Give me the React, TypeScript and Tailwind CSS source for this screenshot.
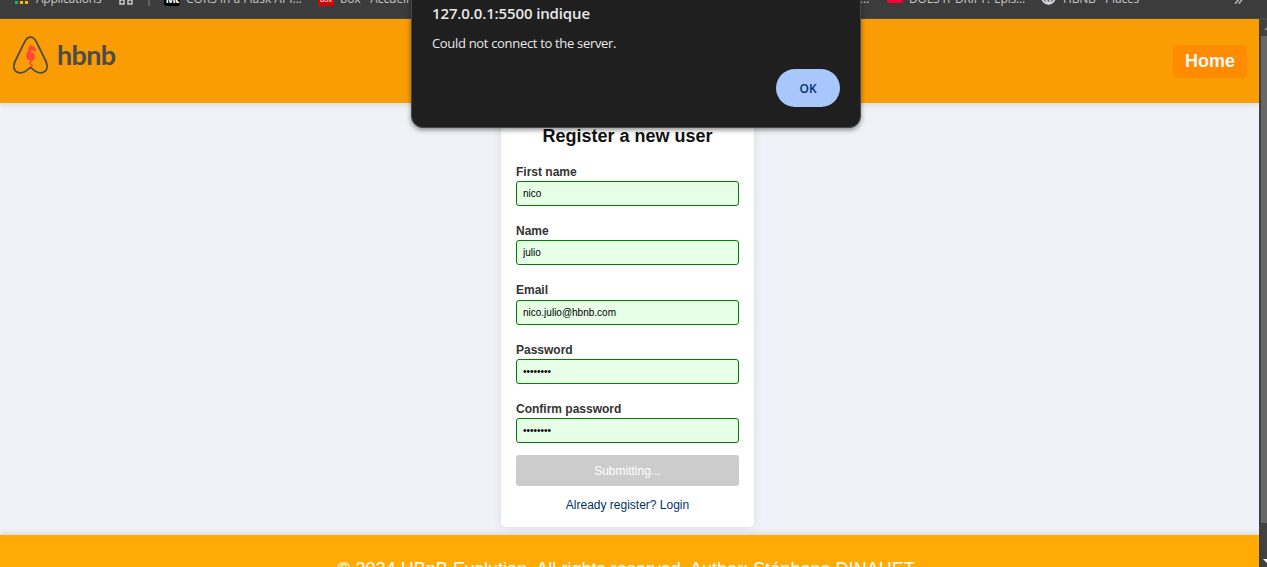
import React from "react";
import { Globe } from "lucide-react";

const uiFont = "font-['Open_Sans','Noto_Sans',sans-serif]";

const fields = [
  { label: "First name", type: "text", value: "nico", gap: "mb-[25px]", line: "leading-[14px]" },
  { label: "Name", type: "text", value: "julio", gap: "mb-[25px]", line: "leading-[14px]" },
  { label: "Email", type: "text", value: "nico.julio@hbnb.com", gap: "mb-[25px]", line: "leading-[15px]" },
  { label: "Password", type: "password", value: "password", gap: "mb-[25px]", line: "leading-[14px]" },
  { label: "Confirm password", type: "password", value: "password", gap: "mb-3", line: "leading-[14px]" },
];

function BookmarksBar() {
  return (
    <div className={`flex h-[19px] shrink-0 items-start overflow-hidden border-b border-[#4a4a4a] bg-[#3c3c3c] text-[12px] leading-[17px] whitespace-nowrap text-[#c7c7c7] ${uiFont}`}>
      <div className="-mt-[10px] flex w-full shrink-0 items-start">
        <svg className="ml-[15px] h-4 w-[14px] shrink-0" viewBox="0 0 14 16">
          <path fill="#ea4335" d="M0 1h3v3H0zM5 1h3v3H5zM10 1h3v3h-3z" />
          <path fill="#34a853" d="M0 6h3v3H0z" />
          <path fill="#4285f4" d="M5 6h3v3H5z" />
          <path fill="#fbbc04" d="M10 6h3v3h-3zM5 11h3v3H5zM10 11h3v3h-3z" />
          <path fill="#34a853" d="M0 11h3v3H0z" />
        </svg>
        <span className="ml-[7px] w-[83px] shrink-0 tracking-[-0.25px]">Applications</span>
        <svg className="h-4 w-[14px] shrink-0" viewBox="0 0 14 16" fill="none" stroke="#c7c7c7" strokeWidth="1.5">
          <path d="M1 1h4v4H1zM9 1h4v4H9zM1 10h4v4H1zM9 10h4v4H9z" />
        </svg>
        <span className="ml-[15px] h-4 w-[2px] shrink-0 bg-[#626262]" />
        <span className="ml-[14px] h-4 w-4 shrink-0 rounded-[3px] bg-black text-center text-[11px] leading-[18px] font-bold tracking-[-1px] text-white">Mt</span>
        <span className="ml-[6px] w-[132px] shrink-0">CORS in a Flask API...</span>
        <span className="h-4 w-4 shrink-0 bg-[#c90808] text-center text-[7px] leading-[19px] text-white">box</span>
        <span className="ml-[6px] w-[520px] shrink-0 tracking-[-0.1px]">box - Accueil</span>
        <span className="w-[27px] shrink-0">...</span>
        <span className="mt-[2px] h-[11px] w-4 shrink-0 rounded-[3px] bg-[#ff0033]" />
        <span className="ml-[6px] w-[132px] shrink-0 tracking-[-0.2px]">DOES IT DRIFT? Épis...</span>
        <Globe className="h-[15px] w-[15px] shrink-0 rounded-full bg-[#727477] text-[#dadce0]" strokeWidth={2.5} />
        <span className="ml-[7px] w-[171px] shrink-0 tracking-[-0.2px]">HBNB - Places</span>
        <span className="shrink-0 text-[18px] leading-[16px]">»</span>
      </div>
    </div>
  );
}

function Logo() {
  return (
    <div className="flex items-start pt-[17px] pl-3">
      <svg className="h-10 w-10" viewBox="0 0 40 40">
        <path
          d="M18.5 1.2c-3.1 0-4.6 2.3-6 5L3 25.5C1.5 28.7 1.4 30.5 2.2 32.8c1.6 4.3 7.1 5.2 10.8 2.8 2-1.3 3.5-2.9 5.5-4.1 2 1.2 3.5 2.8 5.5 4.1 3.7 2.4 9.2 1.5 10.8-2.8.8-2.3.7-4.1-.8-7.3L24.5 6.2c-1.4-2.7-2.9-5-6-5Z"
          fill="none"
          stroke="#4d4c49"
          strokeWidth="1.8"
        />
        <path
          fill="#ff463c"
          d="M18.7 8.3l1.2 1.7 2.6.8 1.2 2.7-.2 2-1.5 0-1.3-1.2-1.7.2-.3 1.2 2.7 1.5 1.6 2.4-.5 3-2 2.1-1.4 1.2-.2 1.6 1.2.7.8 1.3-.6 1.5-1.8.2-.2-1 .8-.6-1.6-1.4-.2-2.4 1-1.8-1.5.1-1.8-1.6-1-2.6.9-.2-1.1-1.6 1.2-.4-.4-1.5 1.2-.1.1-1.6.9-.5-1.1-1.3 1.1-.7-.1-1.4 1.2-.2z"
        />
      </svg>
      <span className="-mt-px ml-[5px] font-[Lato,sans-serif] text-[27px] leading-[40px] font-bold tracking-[-0.7px] text-[#4d4c49]">hbnb</span>
    </div>
  );
}

function Dialog() {
  return (
    <div className={`absolute top-[-12px] left-[411px] z-20 flex h-[140px] w-[450px] flex-col rounded-[12px] border border-[#48484a] bg-[#1f1f1f] px-5 pt-[13px] text-[#e8e8e8] shadow-[0_2px_5px_rgba(0,0,0,0.45)] ${uiFont}`}>
      <h2 className="text-[15px] leading-[22px] font-semibold tracking-[-0.13px] whitespace-nowrap">127.0.0.1:5500 indique</h2>
      <p className="mt-[9px] text-[13px] leading-5 tracking-[-0.32px] whitespace-nowrap">Could not connect to the server.</p>
      <button className="mt-4 h-[38px] w-16 self-end rounded-full bg-[#a8c7fa] pt-px text-[12px] font-semibold text-[#062e6f]">OK</button>
    </div>
  );
}

function RegisterForm() {
  return (
    <form className="flex w-[253px] flex-col rounded-[5px] bg-white px-[15px] pt-[14px] shadow-[0_0_10px_rgba(0,0,0,0.1)]">
      <h1 className="text-center text-[18px] leading-[22px] font-bold text-[#111]">Register a new user</h1>
      <div className="mt-[18px] flex flex-col">
        {fields.map((field) => (
          <label key={field.label} className={`flex flex-col text-[12px] font-bold text-[#333] ${field.line} ${field.gap}`}>
            {field.label}
            <input
              readOnly
              type={field.type}
              value={field.value}
              className="mt-[2px] -mb-[7px] h-[25px] w-full rounded-[3px] border border-[#008000] bg-[#e6ffe6] px-[6px] text-[10px] font-normal text-black outline-none"
            />
          </label>
        ))}
      </div>
      <button type="button" className="mt-[7px] h-[31px] rounded-[3px] bg-[#ccc] text-[12px] text-white">Submitting...</button>
      <a className="mt-3 text-center text-[12px] leading-[14px] text-[#003366]">Already register? Login</a>
    </form>
  );
}

export default function App() {
  return (
    <div className="relative flex h-[567px] w-[1267px] flex-col overflow-hidden font-['Liberation_Sans',Arial,sans-serif]">
      <BookmarksBar />
      <div className="flex min-h-0 flex-1">
        <div className="flex w-[1259px] flex-col bg-[#eff3f8]">
          <header className="z-10 flex h-[84px] shrink-0 items-start justify-between bg-[#fa9d05] shadow-[0_2px_5px_rgba(0,0,0,0.1)]">
            <Logo />
            <a className="mt-[26px] mr-3 flex h-[33px] w-[74px] items-center justify-center rounded-[4px] bg-[#ff8c00] text-[18px] font-bold text-[#f5f5f5]">Home</a>
          </header>
          <main className="flex h-[432px] shrink-0 justify-center pt-2 pr-[4px] pb-2">
            <RegisterForm />
          </main>
          <footer className="z-10 h-[80px] shrink-0 bg-[#ffaa05] pt-[24px] pr-[7px] text-center text-[18px] leading-[21px] tracking-[0.03px] text-white shadow-[0_-2px_5px_rgba(0,0,0,0.1)]">
            © 2024 HBnB Evolution. All rights reserved. Author: Stéphane DINAHET
          </footer>
        </div>
        <div className="flex w-2 flex-col items-end overflow-hidden bg-[#424242]">
          <svg className="h-[17px] w-2 shrink-0" viewBox="0 0 8 17"><path d="M5 11l4-4v4z" fill="#888" /></svg>
          <div className="h-[487px] w-[6px] shrink-0 bg-[#686868]" />
          <svg className="mt-9 h-2 w-2 shrink-0" viewBox="0 0 8 8"><path d="M4 0h4v4z" fill="#fff" /></svg>
        </div>
      </div>
      <Dialog />
    </div>
  );
}
